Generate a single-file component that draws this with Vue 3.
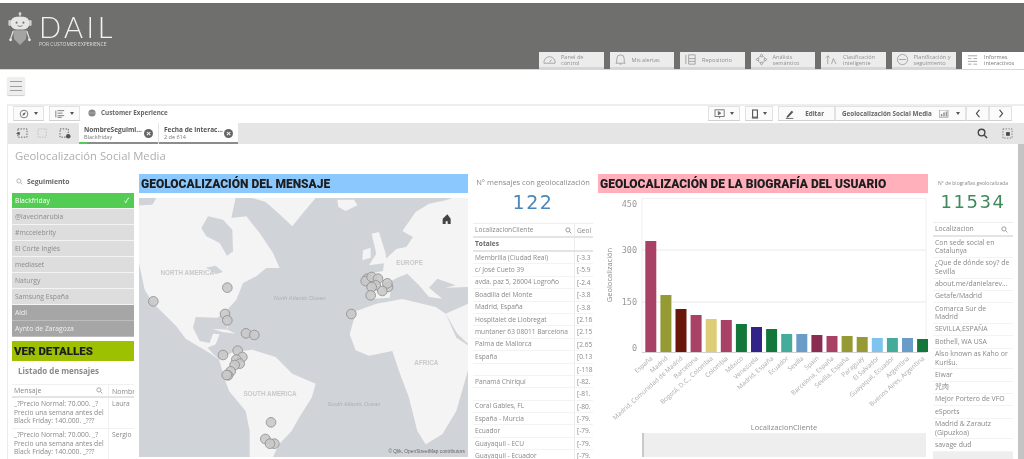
<template>
  <div class="page">
    <header class="top">
      <div class="logo">
        <svg class="robot" viewBox="0 0 28 42" width="24" height="41">
          <circle cx="14" cy="2.5" r="1.6" fill="#ddd" />
          <rect x="13.3" y="3" width="1.4" height="3" fill="#ddd" />
          <rect x="3" y="6" width="22" height="15" rx="7" fill="#e6e6e6" />
          <rect x="0.5" y="10" width="3" height="7" rx="1.4" fill="#cfcfcf" />
          <rect x="24.5" y="10" width="3" height="7" rx="1.4" fill="#cfcfcf" />
          <circle cx="10" cy="13" r="1.2" fill="#777" />
          <circle cx="18" cy="13" r="1.2" fill="#777" />
          <path d="M11 16.5q3 2 6 0" stroke="#777" fill="none" />
          <path d="M6 22h16l-1 10-7 7-7-7z" fill="#a4a4a4" />
          <path d="M6 23l-3 9M22 23l3 9" stroke="#ddd" stroke-width="1.5" />
          <circle cx="3" cy="33" r="1.6" fill="#eee" />
          <circle cx="25" cy="33" r="1.6" fill="#eee" />
        </svg>
        <div class="brand">
          <div class="brand-name">DAIL</div>
          <div class="brand-sub">POR CUSTOMER EXPERIENCE</div>
        </div>
      </div>
      <nav class="tabs">
        <div v-for="t in tabs" :key="t.label" class="tab" :class="{ active: t.active }">
          <svg class="tab-icon" viewBox="0 0 14 14" width="13" height="13" fill="none" stroke="#9a9a9a" stroke-width="0.9">
            <path :d="t.icon" />
          </svg>
          <span>{{ t.label }}</span>
        </div>
      </nav>
    </header>

    <div class="menu-row">
      <button class="burger"><i></i><i></i><i></i></button>
    </div>

    <div class="sense">
      <div class="toolbar">
        <div class="tool-group">
          <div class="tbtn w31">
            <svg viewBox="0 0 12 12" width="10" height="10" fill="none" stroke="#666"><circle cx="6" cy="6" r="4.6" /><path d="M8 4L5 5 4 8l3-1z" fill="#666" stroke="none" /></svg>
            <b class="caret"></b>
          </div>
          <div class="tbtn w31">
            <svg viewBox="0 0 12 12" width="10" height="10" stroke="#666"><path d="M1 2v8M3 2h8M3 5h6M3 8h8M3 10h5" /></svg>
            <b class="caret"></b>
          </div>
          <svg class="globe" viewBox="0 0 10 10" width="8" height="8"><circle cx="5" cy="5" r="4.5" fill="#888" /><path d="M0.5 5h9" stroke="#ccc" stroke-width=".6" /></svg>
          <span class="app-name">Customer Experience</span>
        </div>
        <div class="tool-group right">
          <div class="tbtn w32">
            <svg viewBox="0 0 14 12" width="12" height="10" fill="none" stroke="#666"><rect x="1" y="1" width="11" height="8" /><path d="M5 3l3 2-3 2z" fill="#666" /><path d="M6.500 9v2" /></svg>
            <b class="caret"></b>
          </div>
          <div class="tbtn w28">
            <svg viewBox="0 0 10 12" width="8" height="10" fill="none" stroke="#555" stroke-width="1.4"><rect x="2" y="1" width="6" height="9" /><path d="M1 11h8" /></svg>
            <b class="caret"></b>
          </div>
          <div class="joined">
            <div class="tbtn edit">
              <svg viewBox="0 0 12 12" width="10" height="10"><path d="M2 9l6-7 2 1.500-6 6.500-2 .5z" fill="#555" /><path d="M1 11.300h9" stroke="#555" /></svg>
              <span>Editar</span>
            </div>
            <div class="tbtn sheet">
              <span>Geolocalización Social Media</span>
              <svg viewBox="0 0 12 10" width="10" height="8" fill="#999"><rect x="0" y="0" width="11" height="9" fill="none" stroke="#999" /><rect x="2" y="5" width="2" height="3" /><rect x="5" y="3" width="2" height="5" /><rect x="8" y="2" width="2" height="6" /></svg>
              <b class="caret"></b>
            </div>
            <div class="tbtn arrow"><svg viewBox="0 0 8 12" width="6" height="9" fill="none" stroke="#444" stroke-width="1.600"><path d="M6 1L2 6l4 5" /></svg></div>
            <div class="tbtn arrow"><svg viewBox="0 0 8 12" width="6" height="9" fill="none" stroke="#444" stroke-width="1.600"><path d="M2 1l4 5-4 5" /></svg></div>
          </div>
        </div>
      </div>

      <div class="selbar">
        <div class="sel-left">
          <svg viewBox="0 0 14 12" width="13" height="11" fill="none" stroke="#555" stroke-dasharray="1.500 1.500"><rect x="3" y="1" width="10" height="9" /><path d="M1 6l4-2v4z" fill="#555" stroke="none" stroke-dasharray="0" /></svg>
          <svg viewBox="0 0 14 12" width="13" height="11" fill="none" stroke="#bbb" stroke-dasharray="1.500 1.500"><rect x="1" y="1" width="9" height="9" /></svg>
          <svg viewBox="0 0 14 12" width="13" height="11" fill="none" stroke="#555" stroke-dasharray="1.500 1.500"><rect x="1" y="1" width="9" height="9" /><circle cx="10" cy="9" r="2.500" fill="#555" stroke="none" /></svg>
          <div class="chips">
            <div v-for="c in chips" :key="c.name" class="chip">
              <div class="chip-text">
                <strong>{{ c.name }}</strong>
                <span>{{ c.sub }}</span>
              </div>
              <b class="chip-x">×</b>
              <div class="chip-bar"><i :style="{ width: c.pct + '%' }"></i></div>
            </div>
          </div>
        </div>
        <div class="sel-right">
          <svg viewBox="0 0 12 12" width="11" height="11" fill="none" stroke="#444" stroke-width="1.500"><circle cx="5" cy="5" r="3.600" /><path d="M8 8l3 3" /></svg>
          <svg viewBox="0 0 12 12" width="11" height="11" fill="none" stroke="#777" stroke-dasharray="1.500 1.500"><rect x="1" y="1" width="10" height="10" /><rect x="4.500" y="4.500" width="4" height="4" fill="#444" stroke="none" /></svg>
        </div>
      </div>

      <div class="sheet-area">
        <div class="sheet-body">
          <h1 class="sheet-title">Geolocalización Social Media</h1>
          <div class="grid">
            <section class="col-left">
              <div class="filter-head">
                <svg viewBox="0 0 12 12" width="7" height="7" fill="none" stroke="#999" stroke-width="1.200"><circle cx="5" cy="5" r="3.600" /><path d="M8 8l3 3" /></svg>
                <strong>Seguimiento</strong>
              </div>
              <ul class="filter">
                <li v-for="f in filters" :key="f.name" :class="f.state">
                  <span>{{ f.name }}</span>
                  <em v-if="f.state === 'selected'">✓</em>
                </li>
              </ul>
              <div class="band green">VER DETALLES</div>
              <div class="list-title">Listado de mensajes</div>
              <div class="msg-table">
                <div class="msg-row head">
                  <div class="msg-a">Mensaje<svg viewBox="0 0 12 12" width="7" height="7" fill="none" stroke="#888" stroke-width="1.200"><circle cx="5" cy="5" r="3.600" /><path d="M8 8l3 3" /></svg></div>
                  <div class="msg-b">Nombr</div>
                </div>
                <div v-for="m in messages" :key="m" class="msg-row">
                  <div class="msg-a">_?Precio Normal: 70.000. _?<br />Precio una semana antes del<br />Black Friday: 140.000. _???</div>
                  <div class="msg-b">{{ m }}</div>
                </div>
              </div>
            </section>

            <section class="col-map">
              <div class="band blue">GEOLOCALIZACIÓN DEL MENSAJE</div>
              <svg class="map" viewBox="10 83 987 777">
                <rect x="10" y="83" width="987" height="777" fill="#d0d3d8" />
                <g fill="#f4f4f4">
                  <path d="M10 105L50 103 62 83H300L287 143 332 138 372 188 412 248 432 293 392 293 362 318 322 338 302 388 275 418 277 478 262 432 245 442 180 440 172 472 192 512 222 518 232 490 252 492 240 522 215 532 250 568 222 548 150 505 122 468 82 428 52 398 27 358 10 278Z" />
                  <path d="M350 83H540L500 130 470 168 430 130 390 95Z" />
                  <path d="M605 88H655L665 105 630 122 608 110Z" />
                  <path d="M250 568L290 546 350 538 420 560 470 610 540 640 528 682 490 742 468 782 430 822 412 860H342L342 782 330 722 280 662 268 628Z" />
                  <path d="M642 492L662 422 722 400 800 386 900 410 930 430 962 502 997 525V600L962 722 920 792 870 822 845 782 820 682 790 602 770 542 700 556 660 540Z" />
                  <path d="M692 332L700 310 742 302 746 270 782 236 812 230 832 200 800 182 840 125 880 100 930 90 950 83H997V350L930 352 960 345 905 325 880 352 920 385 880 380 850 345 815 310 790 320 770 330 762 382 702 386Z" />
                  <path d="M708 190L730 185 750 250 752 278 700 285 722 250Z" />
                  <path d="M682 240L705 232 705 262 680 270Z" />
                  <path d="M230 475L275 478 300 490 260 485Z" />
                  <path d="M930 430L997 400V520L965 490Z" />
                </g>
                <g fill="#d0d3d8">
                  <path d="M197 173L217 138 262 148 290 178 292 243 274 256 252 218 212 198Z" />
                  <path d="M12 83H52L40 103 12 105Z" />
                  <path d="M210 292L240 286 262 305 240 312 225 300Z" />
                </g>
                <g>
                  <text x="155" y="313" class="continent">NORTH AMERICA</text>
                  <text x="822" y="284" class="continent">EUROPE</text>
                  <text x="872" y="583" class="continent">AFRICA</text>
                  <text x="403" y="677" class="continent">SOUTH AMERICA</text>
                  <text x="492" y="389" class="ocean">North Atlantic Ocean</text>
                  <text x="655" y="708" class="ocean">South Atlantic Ocean</text>
                </g>
                <circle v-for="(p, i) in points" :key="i" :cx="p[0]" :cy="p[1]" r="14.500" fill="#c9c9c9" fill-opacity="0.9" stroke="#8f8f8f" stroke-width="2.500" />
                <path d="M935 132l-14 13v16h9v-8h6v8h9v-16z" fill="#444" />
                <text x="988" y="848" class="credit">© Qlik, OpenStreetMap contributors</text>
              </svg>
            </section>

            <section class="col-kpi">
              <div class="kpi-label">N° mensajes con geolocalización</div>
              <div class="kpi-value blue-num">122</div>
              <div class="geo-table">
                <div class="geo-row head">
                  <div class="geo-a">LocalizacionCliente<svg viewBox="0 0 12 12" width="7" height="7" fill="none" stroke="#777" stroke-width="1.200"><circle cx="5" cy="5" r="3.600" /><path d="M8 8l3 3" /></svg></div>
                  <div class="geo-b">Geol</div>
                </div>
                <div class="geo-row totals"><div class="geo-a">Totales</div><div class="geo-b"></div></div>
                <div v-for="(r, i) in geoRows" :key="i" class="geo-row">
                  <div class="geo-a">{{ r[0] }}</div>
                  <div class="geo-b">{{ r[1] }}</div>
                </div>
              </div>
            </section>

            <section class="col-chart">
              <div class="band pink">GEOLOCALIZACIÓN DE LA BIOGRAFÍA DEL USUARIO</div>
              <svg class="chart" viewBox="0 0 330 261" width="330" height="261">
                <rect x="44" y="0.500" width="284" height="154" fill="none" stroke="#f0f0f0" />
                <line x1="44" x2="328" y1="52" y2="52" stroke="#e8e8e8" />
                <line x1="44" x2="328" y1="104" y2="104" stroke="#e8e8e8" />
                <line x1="44" x2="328" y1="154.500" y2="154.500" stroke="#cfcfcf" />
                <g class="axis-num">
                  <text x="39" y="9">450</text>
                  <text x="39" y="55">300</text>
                  <text x="39" y="107">150</text>
                  <text x="39" y="153">0</text>
                </g>
                <text class="axis-title" transform="translate(14 77) rotate(-90)">Geolocalización</text>
                <rect v-for="(b, i) in bars" :key="b.name" :x="47.300 + i * 15.1" :y="154 - b.h" width="11" :height="b.h" :fill="b.color" />
                <text v-for="(b, i) in bars" :key="'l' + b.name" class="bar-label" text-anchor="end" :transform="`translate(${55 + i * 15.1} 161) rotate(-42)`">{{ b.name }}</text>
                <text class="axis-title" x="186" y="232">LocalizacionCliente</text>
                <rect x="44" y="235" width="284" height="24" fill="#eeeeee" />
                <rect x="44" y="235" width="2" height="24" fill="#c9c9c9" />
              </svg>
            </section>

            <section class="col-bio">
              <div class="kpi-label small">N° de biografías geolocalizada</div>
              <div class="kpi-value green-num">11534</div>
              <div class="bio-head">Localizacion<svg viewBox="0 0 12 12" width="7" height="7" fill="none" stroke="#777" stroke-width="1.200"><circle cx="5" cy="5" r="3.600" /><path d="M8 8l3 3" /></svg></div>
              <div v-for="b in bios" :key="b" class="bio-row">{{ b }}</div>
              <div class="bio-row last"></div>
            </section>
          </div>
        </div>
        <div class="scrollbar"></div>
      </div>
    </div>
  </div>
</template>

<script setup>
const tabs = [
  { label: 'Panel de control', icon: 'M1 10a6 6 0 1 1 12 0v1H1zM7 10l2-3' },
  { label: 'Mis alertas', icon: 'M3 10V6a4 4 0 0 1 8 0v4l1 1H2zM6 12h2' },
  { label: 'Repositorio', icon: 'M2 2v10M5 2h7v10H5zM5 6h7M5 9h7' },
  { label: 'Análisis semántico', icon: 'M7 1l2 3H5zM7 13l2-3H5zM1 7l3-2v4zM13 7l-3-2v4z' },
  { label: 'Clasificación inteligente', icon: 'M3 12V3L1 5M3 3l2 2M7 12l2-6 3 6' },
  { label: 'Planificación y seguimiento', icon: 'M7 1.500a5.500 5.500 0 1 0 .01 0M3 7h8' },
  { label: 'Informes interactivos', active: true, icon: 'M2 3h10M2 6h4M8 6h4M2 9h10M2 12h4M8 12h4' }
]

const chips = [
  { name: 'NombreSeguimi...', sub: 'Blackfriday', pct: 10 },
  { name: 'Fecha de interac...', sub: '2 de 614', pct: 100 }
]

const filters = [
  { name: 'Blackfriday', state: 'selected' },
  { name: '@lavecinarubia', state: 'alt' },
  { name: '#mccelebrity', state: 'alt' },
  { name: 'El Corte Inglés', state: 'alt' },
  { name: 'mediaset', state: 'alt' },
  { name: 'Naturgy', state: 'alt' },
  { name: 'Samsung España', state: 'alt' },
  { name: 'Aldi', state: 'excluded' },
  { name: 'Aynto de Zaragoza', state: 'excluded' }
]

const messages = ['Laura', 'Sergio']

const points = [
  [53, 393], [275, 352], [268, 431], [275, 450], [331, 489], [356, 494], [262, 554], [306, 541],
  [320, 560], [302, 568], [312, 580], [297, 584], [285, 603], [277, 615], [273, 614], [406, 756],
  [389, 806], [416, 820], [403, 820], [647, 431], [695, 325], [690, 332], [708, 320], [727, 325],
  [720, 345], [708, 350], [757, 350], [755, 339], [740, 362], [705, 375]
]

const geoRows = [
  ['Membrilla (Ciudad Real)', '[-3.3'], ['c/ José Cueto 39', '[-5.9'], ['avda. paz 5, 26004 Logroño', '[-2.4'],
  ['Boadilla del Monte', '[-3.8'], ['Madrid, España', '[-3.8'], ['Hospitalet de Llobregat', '[2.16'],
  ['muntaner 63 08011 Barcelona', '[2.15'], ['Palma de Mallorca', '[2.65'], ['España', '[0.13'], ['', '[-118'],
  ['Panamá Chiriquí', '[-82.'], ['', '[-81.'], ['Coral Gables, FL', '[-80.'], ['España - Murcia', '[-79.'],
  ['Ecuador', '[-79.'], ['Guayaquil - ECU', '[-79.'], ['Guayaquil - Ecuador', '[-79.']
]

const rose = '#a84165'
const olive = '#969a34'
const green = '#13763a'
const teal = '#45ab9b'
const steel = '#6a9bc9'
const bars = [
  { name: 'España', h: 111, color: rose },
  { name: 'Madrid', h: 57, color: olive },
  { name: 'Madrid, Comunidad de Madrid', h: 43, color: '#69170a' },
  { name: 'Barcelona', h: 37, color: rose },
  { name: 'Bogotá, D.C., Colombia', h: 33, color: '#dccd76' },
  { name: 'Colombia', h: 32, color: rose },
  { name: 'México', h: 28, color: green },
  { name: 'Venezuela', h: 25, color: '#312388' },
  { name: 'Madrid, España', h: 23, color: green },
  { name: 'Ecuador', h: 18, color: teal },
  { name: 'Sevilla', h: 18, color: steel },
  { name: 'Spain', h: 17, color: '#8a2d50' },
  { name: 'Barcelona, España', h: 16, color: rose },
  { name: 'Sevilla, España', h: 16, color: olive },
  { name: 'Paraguay', h: 15, color: olive },
  { name: 'El Salvador', h: 14, color: '#7fc4ee' },
  { name: 'Guayaquil, Ecuador', h: 14, color: teal },
  { name: 'Argentina', h: 14, color: steel },
  { name: 'Buenos Aires, Argentina', h: 13, color: green }
]

const bios = [
  'Con sede social en Catalunya',
  '¿Que de dónde soy? de Sevilla',
  'about.me/danielarev...',
  'Getafe/Madrid',
  'Comarca Sur de Madrid',
  'SEVILLA,ESPAÑA',
  'Bothell, WA USA',
  'Also known as Kaho or Kurišu.',
  'Eiwar',
  '咒肉',
  'Mejor Portero de VFO',
  'eSports',
  'Madrid & Zarautz (Gipuzkoa)',
  'savage dud'
]
</script>

<style>
html, body { margin: 0; background: #fff; overflow: hidden; }
</style>

<style scoped>
.page {
  width: 1024px;
  height: 459px;
  overflow: hidden;
  display: flex;
  flex-direction: column;
  font-family: "Open Sans", "Noto Sans CJK JP", sans-serif;
  color: #666;
  background: #fff;
  filter: blur(0.5px);
}

/* cabecera */
.top {
  margin-top: 3px;
  height: 67px;
  flex: none;
  background: #6f6f6d;
  display: flex;
  justify-content: space-between;
  align-items: flex-end;
  border-bottom: 1px solid #d8d8d8;
  box-sizing: border-box;
}
.logo {
  display: flex;
  align-self: flex-start;
  padding: 6px 0 0 8px;
  gap: 7px;
}
.brand-name {
  font-family: Lato, sans-serif;
  font-weight: 300;
  font-size: 29px;
  line-height: 22px;
  letter-spacing: 3.500px;
  color: #f2f2f2;
  margin-top: 6.500px;
}
.brand-sub {
  margin-top: 2.500px;
  font-size: 5px;
  line-height: 8px;
  color: #ddd;
  white-space: nowrap;
}
.tabs { display: flex; gap: 6px; }
.tab {
  width: 64.500px;
  height: 17px;
  box-sizing: border-box;
  background: #ececec;
  border-bottom: 2px solid #d6d6d6;
  display: flex;
  align-items: center;
  gap: 5px;
  padding-left: 4px;
  font-size: 5.600px;
  line-height: 6px;
  color: #8f8f8f;
}
.tab span { width: 38px; }
.tab-icon { flex: none; }
.tab.active { background: #fff; border-bottom-color: #fff; width: 62px; color: #777; }

.menu-row { height: 34px; flex: none; padding: 7px 0 0 7px; box-sizing: border-box; }
.burger {
  width: 18px;
  height: 18px;
  padding: 4px 3px;
  background: #eeeeee;
  border: 0;
  border-radius: 2px;
  box-shadow: 0 1px 1px #ccc;
  display: flex;
  flex-direction: column;
  justify-content: space-between;
}
.burger i { display: block; height: 1px; background: #a0a0a0; }

.sense {
  flex: 1;
  min-height: 0;
  margin-left: 7px;
  display: flex;
  flex-direction: column;
  border-left: 1px solid #eaeaea;
}

/* barra de herramientas */
.toolbar {
  height: 19px;
  flex: none;
  box-sizing: border-box;
  border-top: 2px solid #eeeeee;
  padding-right: 12px;
  display: flex;
  justify-content: space-between;
}
.tool-group { display: flex; align-items: flex-start; gap: 5px; padding-left: 5px; }
.tool-group.right { padding-left: 0; gap: 5px; }
.tbtn {
  height: 15px;
  box-sizing: border-box;
  border: 1px solid #e2e2e2;
  border-bottom-color: #d0d0d0;
  background: #fbfbfb;
  display: flex;
  align-items: center;
  justify-content: space-between;
  padding: 0 5px;
}
.w31 { width: 31px; }
.w32 { width: 32px; }
.w28 { width: 28px; }
.caret {
  width: 0;
  height: 0;
  border: 2.500px solid transparent;
  border-top: 3px solid #555;
  border-bottom: 0;
}
.globe { margin: 3px 0 0 3px; }
.app-name { font-size: 6.300px; font-weight: 700; color: #666; line-height: 14px; }
.joined { display: flex; }
.edit { width: 57px; font-size: 6.300px; font-weight: 700; color: #666; padding: 0 10px 0 6px; }
.sheet { width: 131px; font-size: 6.300px; font-weight: 700; color: #666; white-space: nowrap; padding: 0 5px 0 6px; }
.arrow { width: 23px; justify-content: center; }

/* selecciones */
.selbar {
  height: 21px;
  flex: none;
  background: #e5e5e5;
  display: flex;
  justify-content: space-between;
  align-items: center;
}
.sel-left { display: flex; align-items: center; gap: 9px; padding-left: 7px; height: 100%; }
.sel-right { display: flex; gap: 14px; padding-right: 11px; }
.chips { display: flex; gap: 1px; height: 100%; margin-left: -2px; }
.chip {
  position: relative;
  width: 79px;
  height: 100%;
  background: #fff;
  box-sizing: border-box;
  padding: 3px 5px;
  display: flex;
  justify-content: space-between;
}
.chip-text { display: flex; flex-direction: column; line-height: 7px; white-space: nowrap; }
.chip-text strong { font-size: 6.500px; color: #555; }
.chip-text span { font-size: 5.500px; color: #777; margin-top: 1px; }
.chip-x {
  width: 9px;
  height: 9px;
  margin-top: 3px;
  border-radius: 50%;
  background: #666;
  color: #fff;
  font: 700 8px/9px "Liberation Sans", sans-serif;
  text-align: center;
}
.chip-bar {
  position: absolute;
  left: 0;
  right: 0;
  bottom: 0;
  height: 2px;
  background: #8c8c8c;
}
.chip-bar i { display: block; height: 100%; background: #52cc52; }
.chip + .chip .chip-bar i { background: #8c8c8c; }

.sheet-area { flex: 1; min-height: 0; display: flex; }
.sheet-body { flex: 1; min-width: 0; }
.scrollbar { width: 6px; flex: none; background: #c4c4c4; }
.sheet-title {
  margin: 0;
  height: 26px;
  padding-left: 7px;
  font-size: 11.300px;
  font-weight: 400;
  line-height: 24px;
  color: #aeaeae;
}

.grid {
  display: grid;
  grid-template-columns: 122px 329px 120px 330px 80px;
  column-gap: 5px;
  margin-left: 4px;
}

/* bandas */
.band {
  height: 19px;
  padding-left: 2px;
  font-family: Roboto, sans-serif;
  font-weight: 900;
  font-size: 12px;
  line-height: 20px;
  color: #1d1d1d;
  white-space: nowrap;
  box-sizing: border-box;
}
.blue { background: #8ac8fd; margin-top: 4px; }
.pink { background: #ffb0bb; margin: 4px 0 5px; }
.green { background: #9dc100; height: 20px; font-size: 11.500px; margin-top: 4px; }

/* columna izquierda */
.filter-head {
  height: 23px;
  display: flex;
  align-items: center;
  gap: 4px;
  padding-left: 4px;
  font-size: 6.800px;
  color: #666;
}
.filter { list-style: none; margin: 0; padding: 0; }
.filter li {
  height: 16px;
  box-sizing: border-box;
  border-bottom: 1px solid #f4f4f4;
  padding: 0 5px 0 3px;
  font-size: 6.800px;
  line-height: 15px;
  display: flex;
  justify-content: space-between;
}
.filter li em { font-style: normal; color: #fff; font-size: 7px; }
.selected { background: #52cc52; color: #fff; }
.alt { background: #dddddd; color: #8c8c8c; }
.excluded { background: #a6a6a6; color: #f0f0f0; border-bottom-color: #bdbdbd !important; }
.list-title { height: 23px; padding-left: 6px; font-size: 8px; font-weight: 700; line-height: 20px; color: #8a8a8a; }
.msg-row { display: flex; border-bottom: 1px solid #f0f0f0; font-size: 6.700px; line-height: 8.500px; color: #888; }
.msg-row.head { height: 14px; border-top: 1px solid #f0f0f0; box-sizing: border-box; font-size: 7px; line-height: 13px; border-bottom: 2px solid #e4e4e4; }
.msg-a { width: 96px; flex: none; padding: 2px 0 2px 2px; box-sizing: border-box; white-space: nowrap; overflow: hidden; display: flex; justify-content: space-between; }
.msg-row:not(.head) .msg-a { display: block; height: 30px; }
.msg-row.head .msg-a { padding: 0 5px 0 2px; align-items: center; }
.msg-b { padding: 2px 0 0 3px; border-left: 1px solid #f0f0f0; overflow: hidden; }
.msg-row.head .msg-b { padding-top: 0; }

/* mapa */
.map { display: block; width: 329px; height: 259px; margin-top: 5px; }
.continent { font: 700 19px "Liberation Sans", sans-serif; fill: #c9c9c9; text-anchor: middle; }
.ocean { font: italic 17px "Liberation Sans", sans-serif; fill: #a9b2bc; text-anchor: middle; }
.credit { font: 14.500px "Liberation Sans", sans-serif; fill: #666; text-anchor: end; }

/* KPI + tabla */
.col-kpi { padding-top: 3px; }
.kpi-label { font-size: 7.500px; text-align: center; white-space: nowrap; color: #888; line-height: 18px; }
.kpi-label.small { font-size: 5px; line-height: 16px; }
.kpi-value {
  font-family: "DejaVu Sans", sans-serif;
  font-size: 19px;
  line-height: 20px;
  letter-spacing: 1.500px;
  text-align: center;
}
.blue-num { color: #4a87b8; margin-top: 1px; }
.green-num { color: #3e8a5a; margin-top: 1px; font-size: 18px; }
.geo-table { margin-top: 11px; font-size: 6.600px; color: #888; }
.geo-row { display: flex; height: 12.400px; line-height: 12px; border-bottom: 1px solid #f3f3f3; box-sizing: border-box; white-space: nowrap; }
.geo-row.head { height: 15px; line-height: 14px; border-top: 1px solid #eee; border-bottom: 2px solid #e4e4e4; }
.geo-row.totals { height: 14px; font-weight: 700; color: #666; border-bottom: 2px solid #e4e4e4; }
.geo-a { width: 102px; flex: none; padding: 0 2px 0 2px; box-sizing: border-box; overflow: hidden; display: flex; justify-content: space-between; align-items: center; border-right: 1px solid #ececec; }
.geo-b { padding-left: 2px; overflow: hidden; flex: 1; }

/* grafico */
.chart { display: block; }
.axis-num text { font: 8.500px "DejaVu Sans Mono", monospace; fill: #999; text-anchor: end; }
.axis-title { font: 7.500px "Open Sans", sans-serif; fill: #888; text-anchor: middle; }
.bar-label { font: 6.400px "Open Sans", sans-serif; fill: #aaa; }

/* biografias */
.col-bio { font-size: 6.900px; color: #888; overflow: hidden; padding-top: 5px; height: 289px; box-sizing: border-box; }
.bio-head {
  margin-top: 10px;
  height: 15px;
  line-height: 14px;
  padding: 0 5px 0 2px;
  display: flex;
  justify-content: space-between;
  align-items: center;
  border-top: 1px solid #eee;
  border-bottom: 2px solid #e4e4e4;
  box-sizing: border-box;
}
.bio-row {
  padding: 1.500px 3px 1.300px 2px;
  line-height: 8.500px;
  border-bottom: 1px solid #f3f3f3;
}
.bio-row.last { height: 8px; background: #eee; }
</style>
